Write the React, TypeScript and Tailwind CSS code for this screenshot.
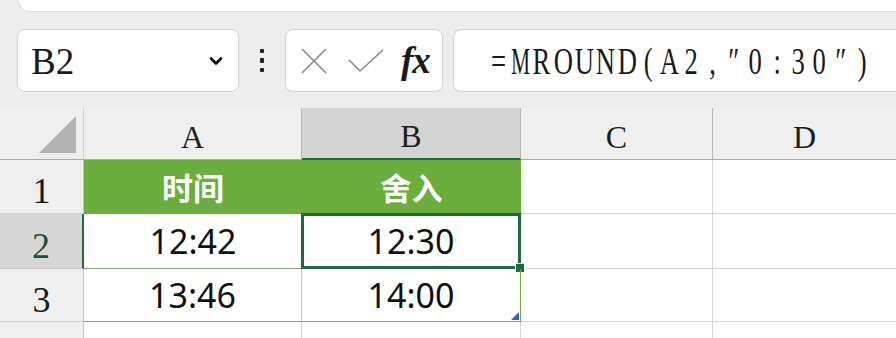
import { ChevronDown } from 'lucide-react';

const serif = { fontFamily: '"Liberation Serif", "Noto Sans CJK SC", serif' };

function ColHeader({ label, selected, last }: { label: string; selected?: boolean; last?: boolean }) {
  return (
    <div
      className={`flex items-center justify-center pt-[6px] text-[32px] text-[#1d1d1d] ${
        selected
          ? 'bg-[#d4d4d4] border-b-2 border-b-[#1e6b41] border-r border-r-[#b8b8b8]'
          : 'bg-[#efefef] border-b border-b-[#a9a9a9]'
      } ${!selected && !last ? 'border-r border-r-[#b5b5b5]' : ''}`}
      style={serif}
    >
      {label}
    </div>
  );
}

function RowHeader({ n, selected, bottomClass }: { n: number; selected?: boolean; bottomClass?: string }) {
  return (
    <div
      className={`flex items-center justify-center pt-[9px] text-[36px] leading-none ${
        selected
          ? 'bg-[#d6d6d6] text-[#1d4e3a] border-r-2 border-r-[#1e6b41]'
          : 'bg-[#efefef] text-[#1a1a1a] border-r border-r-[#c4c4c4]'
      } ${bottomClass ?? 'border-b border-b-[#d2d2d2]'}`}
      style={serif}
    >
      {n}
    </div>
  );
}

const timeFont = { fontFamily: '"Noto Sans", "Liberation Sans", sans-serif' };
const cjkFont = { fontFamily: '"Noto Sans CJK SC", sans-serif' };

const formula = '=MROUND(A2,″0:30″)'.split('');

export default function App() {
  return (
    <div className="w-[896px] h-[338px] overflow-hidden bg-[#ededed] flex flex-col">
      {/* top panel edge */}
      <div className="h-[12px] pl-[18px]">
        <div className="h-full bg-white rounded-bl-[14px] border-b border-l border-[#dedede]" />
      </div>

      {/* formula bar */}
      <div className="h-[96px] flex items-start pt-[17px] pl-[17px]">
        <div className="w-[222px] h-[63px] bg-white border border-[#d3d3d3] rounded-lg flex items-center pl-[13px] pr-[12px]">
          <span className="text-[37px] text-[#1a1a1a] leading-none pt-[2px]" style={serif}>B2</span>
          <ChevronDown className="ml-auto w-[20px] h-[20px] text-[#111]" strokeWidth={3.2} />
        </div>
        <div className="w-[46px] h-[63px] flex flex-col items-center justify-center gap-[5px]">
          <div className="w-[4px] h-[4px] bg-[#222] rounded-[1px]" />
          <div className="w-[4px] h-[5px] bg-[#222] rounded-[1px]" />
          <div className="w-[4px] h-[4px] bg-[#222] rounded-[1px]" />
        </div>
        <div className="w-[158px] h-[63px] bg-white border border-[#d3d3d3] rounded-lg flex items-center pl-[14px]">
          <svg width="28" height="28" viewBox="0 0 28 28" className="text-[#8a8a8a]">
            <path d="M2 2 L26 26 M26 2 L2 26" stroke="currentColor" strokeWidth="1.6" fill="none" />
          </svg>
          <svg width="36" height="26" viewBox="0 0 36 26" className="ml-[20px] text-[#8a8a8a]">
            <path d="M1 12 L12 23 L35 2" stroke="currentColor" strokeWidth="1.6" fill="none" />
          </svg>
          <span
            className="ml-[17px] text-[37px] italic font-bold text-[#1a1a1a] leading-none tracking-[-1px]"
            style={serif}
          >
            fx
          </span>
        </div>
        <div className="ml-[10px] flex-1 h-[63px] bg-white border border-r-0 border-[#d3d3d3] rounded-l-lg flex items-center pl-[34px]">
          {/* monospace-like serif formula: every glyph sits in a fixed cell */}
          <span className="flex text-[37px] leading-none text-[#1a1a1a] whitespace-nowrap pt-[2px]" style={serif}>
            {formula.map((c, i) => (
              <span key={i} className="flex w-[21.4px] justify-center">
                <span className={`inline-block ${c === 'M' ? 'scale-x-[0.58]' : 'scale-x-[0.72]'}`}>{c}</span>
              </span>
            ))}
          </span>
        </div>
      </div>

      {/* sheet grid */}
      <div className="flex-1 grid grid-cols-[84px_218px_219px_192px_1fr] grid-rows-[52px_54px_55px_53px_1fr] bg-white">
        {/* header row */}
        <div className="bg-[#efefef] border-r border-r-[#d0d0d0] border-b border-b-[#a9a9a9] flex items-end justify-end pr-[7px] pb-[6px]">
          <svg width="37" height="37" viewBox="0 0 37 37">
            <path d="M37 0 L37 37 L0 37 Z" fill="#b3b3b3" />
          </svg>
        </div>
        <ColHeader label="A" />
        <ColHeader label="B" selected />
        <ColHeader label="C" />
        <ColHeader label="D" last />

        {/* row 1 */}
        <RowHeader n={1} />
        <div className="bg-[#6aae3d] flex items-center justify-center text-white font-bold text-[31px]" style={cjkFont}>
          时间
        </div>
        <div className="bg-[#6aae3d] flex items-center justify-center text-white font-bold text-[31px]" style={cjkFont}>
          舍入
        </div>
        <div className="border-r border-r-[#d6d6d6] border-b border-b-[#d6d6d6]" />
        <div className="border-b border-b-[#d6d6d6]" />

        {/* row 2 */}
        <RowHeader n={2} selected bottomClass="border-b border-b-[#c8c8c8]" />
        <div
          className="flex items-center justify-center text-[34px] text-[#111] border-b border-b-[#7f9f70]"
          style={timeFont}
        >
          12:42
        </div>
        <div
          className="relative -mt-[1px] -ml-[1px] border-[3px] border-[#1e6b41] flex items-center justify-center text-[34px] text-[#111]"
          style={timeFont}
        >
          12:30
          <div className="absolute -right-[7px] -bottom-[7px] w-[10px] h-[10px] bg-[#1e6b41] border border-white" />
        </div>
        <div className="border-r border-r-[#d6d6d6] border-b border-b-[#d6d6d6]" />
        <div className="border-b border-b-[#d6d6d6]" />

        {/* row 3 */}
        <RowHeader n={3} bottomClass="border-b border-b-[#d2d2d2]" />
        <div
          className="flex items-center justify-center text-[34px] text-[#111] border-b border-b-[#6aae3d] border-r border-r-[#c9c9c9]"
          style={timeFont}
        >
          13:46
        </div>
        <div
          className="relative flex items-center justify-center text-[34px] text-[#111] border-b border-b-[#6aae3d] border-r border-r-[#6aae3d]"
          style={timeFont}
        >
          14:00
          <svg width="8" height="8" viewBox="0 0 8 8" className="absolute right-[1px] bottom-[1px]">
            <path d="M8 0 L8 8 L0 8 Z" fill="#2f5fc4" />
          </svg>
        </div>
        <div className="border-r border-r-[#d6d6d6] border-b border-b-[#d6d6d6]" />
        <div className="border-b border-b-[#d6d6d6]" />

        {/* row 4 (partial) */}
        <div className="bg-[#efefef] border-r border-r-[#c4c4c4]" />
        <div className="border-r border-r-[#d6d6d6]" />
        <div className="border-r border-r-[#d6d6d6]" />
        <div className="border-r border-r-[#d6d6d6]" />
        <div />
      </div>
    </div>
  );
}
